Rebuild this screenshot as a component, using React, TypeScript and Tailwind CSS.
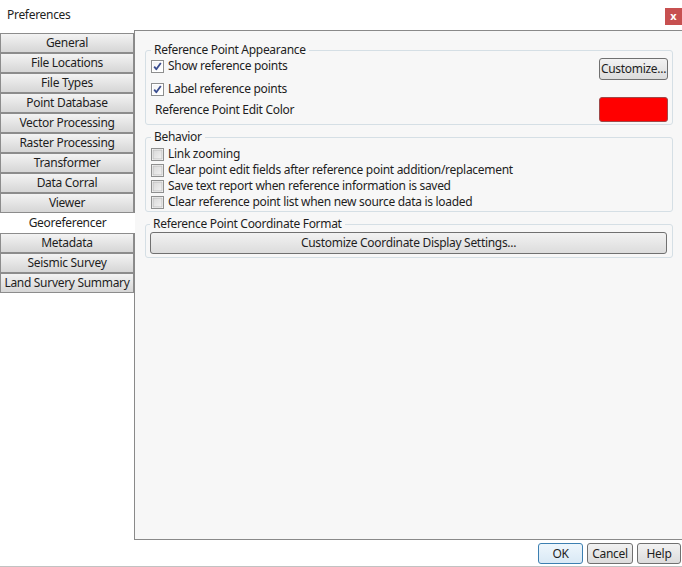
import React from 'react';

const tabs = [
  'General',
  'File Locations',
  'File Types',
  'Point Database',
  'Vector Processing',
  'Raster Processing',
  'Transformer',
  'Data Corral',
  'Viewer',
  'Georeferencer',
  'Metadata',
  'Seismic Survey',
  'Land Survery Summary',
];

const Checkbox: React.FC<{ checked?: boolean }> = ({ checked }) => (
  <svg width="13" height="13" viewBox="0 0 13 13" className="shrink-0">
    <defs>
      <linearGradient id={checked ? 'cbOn' : 'cbOff'} x1="0" y1="0" x2="1" y2="1">
        <stop offset="0" stopColor={checked ? '#f4f4f4' : '#d8d8d8'} />
        <stop offset="1" stopColor={checked ? '#ffffff' : '#f2f2f2'} />
      </linearGradient>
    </defs>
    <rect x="0.5" y="0.5" width="12" height="12" fill="#fff" stroke="#8e8f8f" />
    <rect x="2" y="2" width="9" height="9" fill={`url(#${checked ? 'cbOn' : 'cbOff'})`} stroke={checked ? 'none' : '#b9b9b9'} strokeWidth="0.8" />
    {checked && (
      <path d="M3.2 6.6 L5.3 9.2 L9.8 2.9" fill="none" stroke="#3a4d8f" strokeWidth="1.8" strokeLinejoin="round" />
    )}
  </svg>
);

const CheckRow: React.FC<{ label: string; checked?: boolean }> = ({ label, checked }) => (
  <div className="flex items-center gap-[4px] h-[16px]">
    <Checkbox checked={checked} />
    <span>{label}</span>
  </div>
);

const Group: React.FC<{ title: string; className?: string; children: React.ReactNode }> = ({ title, className, children }) => (
  <fieldset className={`border border-[#d5dfe5] rounded-[3px] ${className ?? ''}`}>
    <legend className="px-[3px] leading-[14px]">{title}</legend>
    {children}
  </fieldset>
);

const btn =
  'border border-[#707070] rounded-[3px] bg-gradient-to-b from-[#f2f2f2] to-[#dcdcdc] leading-none flex items-center justify-center';

export default function App() {
  return (
    <div
      className="w-[682px] h-[567px] bg-white overflow-hidden text-[12px] tracking-[-0.3px] text-[#1e1e1e] flex flex-col"
      style={{ fontFamily: '"Noto Sans", "Open Sans", sans-serif' }}
    >
      {/* title bar */}
      <div className="h-[30px] flex items-center justify-between pl-[7px] shrink-0">
        <span className="pb-[1px]">Preferences</span>
        <div className="w-[17px] h-[17px] bg-[#c75050] text-white font-bold text-[11px] tracking-normal leading-none flex items-center justify-center pb-[2px] mt-[2px]">
          x
        </div>
      </div>

      <div className="flex h-[510px] shrink-0">
        <div className="w-[134px] pt-[3px] flex flex-col relative z-10 shrink-0">
          {tabs.map((t) =>
            t === 'Georeferencer' ? (
              <div key={t} className="h-[20px] w-[135px] bg-white flex items-center justify-center">
                {t}
              </div>
            ) : (
              <div
                key={t}
                className="h-[20px] w-[134px] border border-[#8c8c8c] bg-gradient-to-b from-[#f3f3f3] to-[#d6d6d6] flex items-center justify-center leading-none"
              >
                {t}
              </div>
            )
          )}
        </div>

        <div className="flex-1 min-w-[560px] border-t border-l border-b border-[#898989] bg-[#f7f7f7] pl-[10px] pt-[12px] pr-[10px]">
          <div className="w-[528px] flex flex-col gap-[5px]">
            <Group title="Reference Point Appearance" className="pl-[5px] pr-[4px] pt-[1px] pb-[2px]">
              <div className="flex justify-between">
                <div className="flex flex-col">
                  <CheckRow label="Show reference points" checked />
                  <div className="mt-[7px]">
                    <CheckRow label="Label reference points" checked />
                  </div>
                  <div className="mt-[5px] h-[16px] flex items-center pl-[4px]">Reference Point Edit Color</div>
                </div>
                <div className="flex flex-col">
                  <div className={`${btn} w-[69px] h-[22px]`}>Customize...</div>
                  <div className="mt-[17px] w-[69px] h-[25px] bg-[#ff0000] border border-[#a04848] rounded-[3px]" />
                </div>
              </div>
            </Group>

            <Group title="Behavior" className="pl-[5px] pr-[4px] pt-[2px] pb-[1px]">
              <CheckRow label="Link zooming" />
              <CheckRow label="Clear point edit fields after reference point addition/replacement" />
              <CheckRow label="Save text report when reference information is saved" />
              <CheckRow label="Clear reference point list when new source data is loaded" />
            </Group>

            <Group title="Reference Point Coordinate Format" className="pl-[4px] pr-[5px] pt-[1px] pb-[3px]">
              <div className={`${btn} h-[22px] w-full`}>Customize Coordinate Display Settings...</div>
            </Group>
          </div>
        </div>
      </div>

      {/* footer */}
      <div className="h-[27px] border-b border-[#c2c2c2] flex items-start justify-end gap-[4px] pt-[3px] pr-[1px] shrink-0">
        <div className="w-[45px] h-[21px] border border-[#3c7fb1] rounded-[3px] bg-gradient-to-b from-[#eef6fc] to-[#d9e9f5] flex items-center justify-center leading-none">
          OK
        </div>
        <div className={`${btn} w-[46px] h-[21px]`}>Cancel</div>
        <div className={`${btn} w-[44px] h-[21px]`}>Help</div>
      </div>
    </div>
  );
}
